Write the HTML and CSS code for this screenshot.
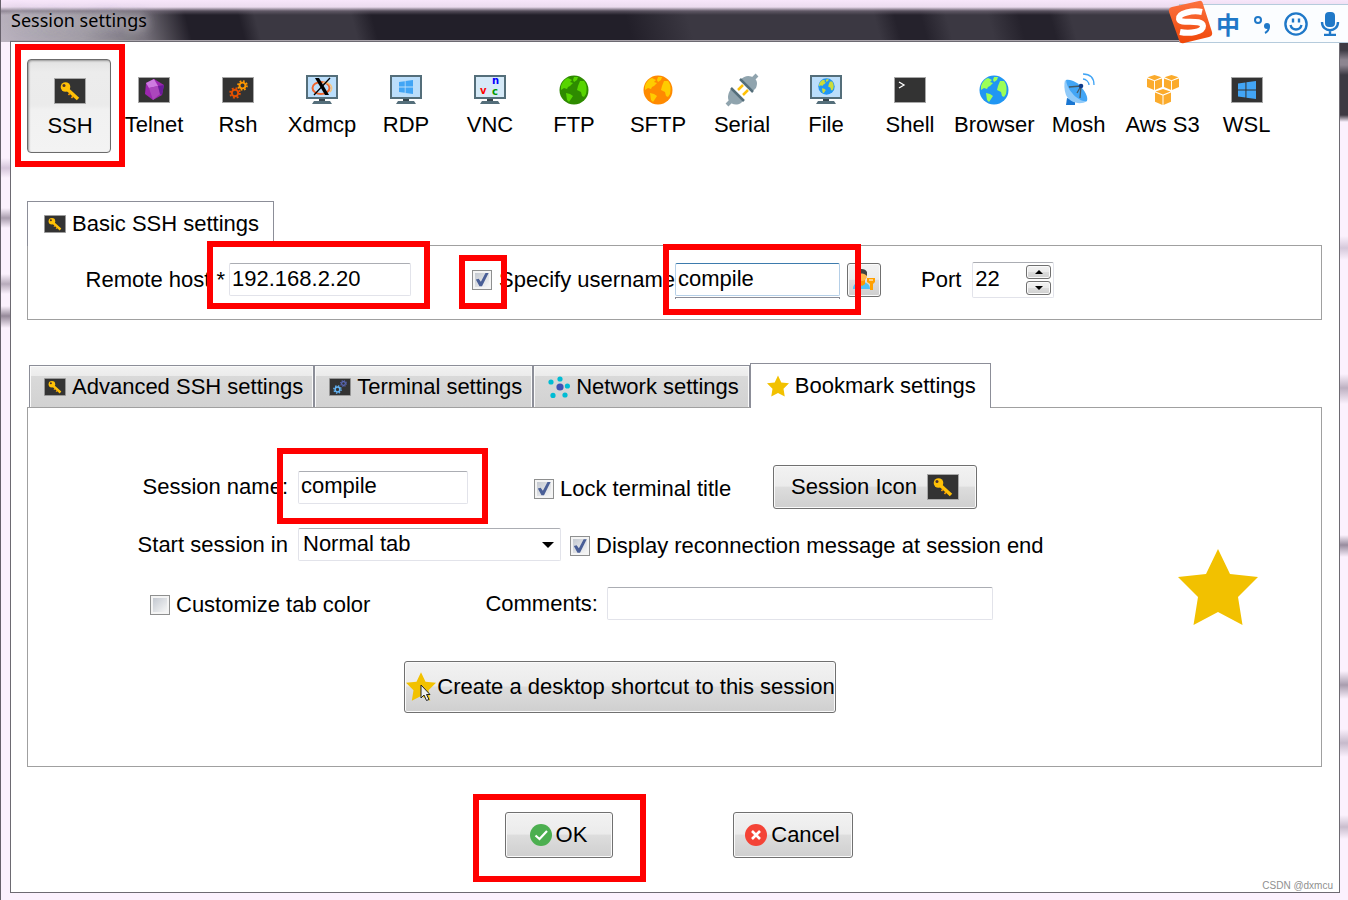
FILE: index.html
```html
<!DOCTYPE html>
<html lang="en">
<head>
  <meta charset="UTF-8">
  <title>Session settings</title>
  <link rel="stylesheet" href="styles.css">
</head>
<body>
  <!-- icon sprite -->
  <svg class="sprite" aria-hidden="true">
    <symbol id="i-screen" viewBox="0 0 32 26">
      <rect x="0.5" y="0.5" width="31" height="25" fill="#333" stroke="#a8a8a8"/>
    </symbol>
    <symbol id="i-key" viewBox="0 0 32 26">
      <rect x="0.5" y="0.5" width="31" height="25" fill="#333" stroke="#a8a8a8"/>
      <path d="M13 11 L24 21" stroke="#ffc107" stroke-width="3.6"/>
      <path d="M16 15 L14.500 17 M19 18 L17.500 20" stroke="#ffa000" stroke-width="1.500"/>
      <circle cx="11.500" cy="9" r="4.800" fill="#ffc107"/>
      <circle cx="10" cy="7.500" r="1.500" fill="#4e342e"/>
    </symbol>
    <symbol id="i-gear" viewBox="0 0 12 12">
      <circle cx="6" cy="6" r="3.200" fill="none" stroke="currentColor" stroke-width="2"/>
      <circle cx="6" cy="6" r="4.900" fill="none" stroke="currentColor" stroke-width="1.800" stroke-dasharray="1.900 1.950"/>
    </symbol>
    <symbol id="i-monitor" viewBox="0 0 32 30">
      <rect x="1" y="1" width="30" height="22" fill="#bbdefb" stroke="#546e7a" stroke-width="2"/>
      <path d="M13 24h6v3h-6z" fill="#37474f"/>
      <path d="M8 26h16l2 3H6z" fill="#546e7a"/>
    </symbol>
    <symbol id="i-windows" viewBox="0 0 16 16">
      <path d="M0 2.300L6.600 1.300V7.500H0z M7.500 1.200L16 0V7.500H7.500z M0 8.500H6.600V14.700L0 13.700z M7.500 8.500H16V16L7.500 14.800z" fill="currentColor"/>
    </symbol>
    <symbol id="i-globe" viewBox="0 0 30 30">
      <circle cx="15" cy="15" r="14.500" fill="var(--sea)"/>
      <path d="M2 11C3 7 6 4 9 3L13 5L11 7L14 8L11 11L9 12L8 14L5 13L2 15z" fill="var(--land)"/>
      <path d="M15 2L19 2L18 5L15 7L14 5z" fill="var(--land)"/>
      <path d="M7 18L11 19L14 21L12 24L10 27L8 25z" fill="var(--land)"/>
      <path d="M21 6L25 6C28 10 28 14 27 19L25 22L23 21L22 17L18 15L19 11z" fill="var(--land)"/>
    </symbol>
    <symbol id="i-star" viewBox="0 0 80 76">
      <path d="M40 0L52 25L80 28L60 48L64.500 76L40 63L15.500 76L20 48L0 28L28 25z" fill="#f2c100"/>
    </symbol>
    <symbol id="i-cube" viewBox="0 0 16 16">
      <path d="M8 0L15.500 2.500L8 5.500L0.500 2.500z M0 3.600L7.500 6.500V16L0 12.800z M16 3.600L8.500 6.500V16L16 12.800z" fill="#fbab2c"/>
    </symbol>
  </svg>

  <div class="window">
    <header class="titlebar"><h1>Session settings</h1></header>

    <main class="client">
      <nav class="types" aria-label="Session type">
        <button class="type active mark mark-ssh">
          <svg class="icon"><use href="#i-key" y="3" width="32" height="26"/></svg>SSH</button>
        <button class="type"><svg class="icon">
          <use href="#i-screen" y="3" width="32" height="26"/>
          <path d="M16 5L26 11L24 21L15 26L7 20L8 9z" fill="#9c27b0"/>
          <path d="M16 5L20 12L11 14L8 9z" fill="#ce7be0"/><path d="M11 14L20 12L22 20L15 26z" fill="#ab47bc"/><path d="M20 12L26 11L24 21L22 20z" fill="#6a1b9a"/>
        </svg>Telnet</button>
        <button class="type"><svg class="icon">
          <use href="#i-screen" y="3" width="32" height="26"/>
          <use class="c-rust" href="#i-gear" x="7" y="13" width="12" height="12"/>
          <use class="c-orange" href="#i-gear" x="15" y="6" width="11" height="11"/>
        </svg>Rsh</button>
        <button class="type"><svg class="icon">
          <use href="#i-monitor" y="1" width="32" height="30"/>
          <ellipse cx="15" cy="14" rx="8.500" ry="6" fill="none" stroke="#f0642d" stroke-width="2"/>
          <path d="M17 8.500C24 8 28 13 24 18" fill="none" stroke="#f5c37e" stroke-width="1.500"/>
          <path d="M9 4h4l10 17h-4z" fill="#000"/>
          <path d="M24 4L8 21" stroke="#000" stroke-width="1.300"/>
        </svg>Xdmcp</button>
        <button class="type"><svg class="icon">
          <use href="#i-monitor" y="1" width="32" height="30"/>
          <use class="c-blue" href="#i-windows" x="9" y="6" width="14" height="14"/>
        </svg>RDP</button>
        <button class="type"><svg class="icon icon-vnc">
          <use href="#i-monitor" y="1" width="32" height="30"/>
          <rect x="2" y="3" width="28" height="20" fill="#d6eaf8"/>
          <text x="6" y="20" fill="#f00">v</text><text x="18" y="10" fill="#00f">n</text><text x="18" y="21" fill="#090">c</text>
        </svg>VNC</button>
        <button class="type"><svg class="icon globe-green"><use href="#i-globe" x="1" y="1" width="30" height="30"/></svg>FTP</button>
        <button class="type"><svg class="icon globe-orange"><use href="#i-globe" x="1" y="1" width="30" height="30"/></svg>SFTP</button>
        <button class="type"><svg class="icon">
          <path d="M1 31L6 26M26 6L31 1" stroke="#90a4ae" stroke-width="4"/>
          <path d="M12 16L17 11M17 21L22 16" stroke="#ffc107" stroke-width="2.500"/>
          <path d="M6 14L18 26L15 29C10 32 5 30 3 27C1 24 2 18 6 14z M14 6L26 18L30 14C32 9 31 6 28 4C24 1 19 1 14 6z" fill="#90a4ae"/>
          <path d="M5 14L18 27M14 5L27 18" stroke="#546e7a" stroke-width="2.500"/>
        </svg>Serial</button>
        <button class="type"><svg class="icon globe-file">
          <use href="#i-monitor" y="1" width="32" height="30"/>
          <use href="#i-globe" x="8" y="4" width="17" height="17"/>
        </svg>File</button>
        <button class="type"><svg class="icon">
          <use href="#i-screen" y="3" width="32" height="26"/>
          <path d="M5 8L10 11L5 14" fill="none" stroke="#fff" stroke-width="1.300"/>
        </svg>Shell</button>
        <button class="type"><svg class="icon globe-blue"><use href="#i-globe" x="1" y="1" width="30" height="30"/></svg>Browser</button>
        <button class="type"><svg class="icon">
          <path d="M4 24L12 26L12 31H3z" fill="#1976d2"/>
          <path d="M2 6L24 27C17 32 6 28 3 21C1 16 1 10 2 6z" fill="#90caf9"/>
          <path d="M3 6C9 5 15 9 19 14C23 19 25 23 24 27C17 29 4 17 3 6z" fill="#42a5f5"/>
          <path d="M6 13L18 12L17 24M18 12L14 19" fill="none" stroke="#455a64" stroke-width="1.300"/>
          <circle cx="18" cy="12" r="2.300" fill="#0d3c8c"/>
          <path d="M20 5C23 5 26 8 26 11M20 0C27 0 31 4 31 11" fill="none" stroke="#42a5f5" stroke-width="1.300"/>
        </svg>Mosh</button>
        <button class="type"><svg class="icon">
          <use href="#i-cube" y="1" width="15" height="15"/><use href="#i-cube" x="17" y="1" width="15" height="15"/><use href="#i-cube" x="8" y="15" width="16" height="16"/>
        </svg>Aws S3</button>
        <button class="type"><svg class="icon">
          <use href="#i-screen" y="3" width="32" height="26"/>
          <use class="c-blue" href="#i-windows" x="7" y="7" width="18" height="18"/>
        </svg>WSL</button>
      </nav>

      <section class="basic">
        <div class="tabs" role="tablist">
          <button class="tab selected" role="tab" aria-selected="true"><svg class="tab-icon"><use href="#i-key" y="2" width="22" height="18"/></svg>Basic SSH settings</button>
        </div>
        <div class="panel basic-panel">
          <label class="host-label" for="host">Remote host *</label>
          <span class="mark mark-host"><input class="box host" id="host" type="text" value="192.168.2.20"></span>
          <span class="mark mark-check"><input type="checkbox" id="specify" checked></span>
          <label class="specify-label" for="specify">Specify username</label>
          <span class="mark mark-user"><input class="box user" type="text" value="compile" aria-label="Username"></span>
          <button class="btn user-btn" aria-label="Manage users">
            <svg width="26" height="26">
              <path d="M2 22C2 17 6 15 11 15S19 18 19 22z" fill="#4fc3f7"/>
              <path d="M8 12h6v5l-3 2l-3-2z" fill="#ff9800"/>
              <circle cx="11" cy="9" r="5" fill="#ffb74d"/>
              <path d="M5 9C4 1 14 0 16 5V9C14 7 12 6 9 7L6 10z" fill="#424242"/>
              <path d="M16 11h8v4l-2 2v6h-3v-6l-3-2z" fill="#ffa000"/><path d="M18 13h4" stroke="#fff"/>
            </svg>
          </button>
          <label class="port-label" for="port">Port</label>
          <span class="spinner">
            <input id="port" type="text" value="22">
            <span class="spin-buttons">
              <button class="btn" aria-label="Increase port"><svg width="8" height="4"><path d="M0 4L4 0L8 4z"/></svg></button>
              <button class="btn" aria-label="Decrease port"><svg width="8" height="4"><path d="M0 0L4 4L8 0z"/></svg></button>
            </span>
          </span>
        </div>
      </section>

      <section class="details">
        <div class="tabs tabs-details" role="tablist">
          <button class="tab" role="tab"><svg class="tab-icon"><use href="#i-key" y="2" width="22" height="18"/></svg>Advanced SSH settings</button>
          <button class="tab" role="tab"><svg class="tab-icon">
            <use href="#i-screen" y="2" width="22" height="18"/>
            <use class="c-sky" href="#i-gear" x="4" y="9" width="9" height="9"/><use class="c-indigo" href="#i-gear" x="11" y="4" width="7" height="7"/>
          </svg>Terminal settings</button>
          <button class="tab" role="tab"><svg class="tab-icon">
            <g fill="#00bcd4"><circle cx="3" cy="6" r="2.600"/><circle cx="12" cy="3" r="2.600"/><circle cx="19.400" cy="10" r="2.600"/><circle cx="17" cy="19" r="2.600"/><circle cx="5" cy="19.400" r="2.600"/></g>
            <circle cx="12" cy="11" r="3.600" fill="#3f51b5"/>
          </svg>Network settings</button>
          <button class="tab selected" role="tab" aria-selected="true"><svg class="tab-icon"><use href="#i-star" width="22" height="22"/></svg>Bookmark settings</button>
        </div>
        <div class="panel bookmark-panel">
          <div class="form">
            <div class="row">
              <label class="row-label" for="name">Session name:</label>
              <span class="mark mark-name"><input class="box name" id="name" type="text" value="compile"></span>
              <label class="check lock"><input type="checkbox" checked>Lock terminal title</label>
              <button class="btn icon-btn">Session Icon <svg width="32" height="26"><use href="#i-key" width="32" height="26"/></svg></button>
            </div>
            <div class="row row-start">
              <label class="row-label" for="start">Start session in</label>
              <span class="drop"><select class="box" id="start"><option>Normal tab</option></select></span>
              <label class="check"><input type="checkbox" checked>Display reconnection message at session end</label>
            </div>
            <div class="row row-comments">
              <label class="check custom"><input type="checkbox">Customize tab color</label>
              <label class="comments-label" for="comments">Comments:</label>
              <input class="box comments" id="comments" type="text">
            </div>
            <button class="btn shortcut">
              <svg width="32" height="32">
                <use href="#i-star" x="1" y="1" width="30" height="29"/>
                <path d="M16 14V27L19 24L21.500 29.500L24 28.500L21.500 23.500H25z" fill="#eee" stroke="#222"/>
              </svg>Create a desktop shortcut to this session
            </button>
          </div>
          <svg class="big-star" width="80" height="76" aria-hidden="true"><use href="#i-star" width="80" height="76"/></svg>
        </div>
      </section>

      <footer class="actions">
        <button class="btn ok mark mark-ok"><svg width="22" height="22">
          <circle cx="11" cy="11" r="11" fill="#4caf50"/><path d="M5.500 11.500L9.500 15L17 7" fill="none" stroke="#fff" stroke-width="2.200"/>
        </svg>OK</button>
        <button class="btn cancel"><svg width="22" height="22">
          <circle cx="11" cy="11" r="11" fill="#f44336"/><path d="M7 7L15 15M15 7L7 15" stroke="#fff" stroke-width="2.600"/>
        </svg>Cancel</button>
      </footer>
      <span class="credit">CSDN @dxmcu</span>
    </main>
  </div>

  <!-- floating input method bar -->
  <div class="ime">
    <svg class="ime-logo" width="46" height="44" viewBox="0 0 46 44">
      <defs><linearGradient id="flame" x2="0" y2="1"><stop offset="0" stop-color="#fb7240"/><stop offset="1" stop-color="#f04708"/></linearGradient></defs>
      <path d="M4 7L31 1Q34 0 35 4L44 32Q45 36 41 37L16 43Q12 44 11 40L1 12Q0 8 4 7z" fill="url(#flame)"/>
      <path d="M34 12C25 10 10 13 11 19C12 25 34 18 35 26C35 32 22 34 12 32" fill="none" stroke="#fff" stroke-width="6"/>
    </svg>
    <span class="ime-lang" lang="zh">中</span>
    <svg width="20" height="24"><circle cx="6" cy="8" r="3" fill="none" stroke="#1f78c8" stroke-width="2"/><circle cx="15" cy="14" r="3" fill="#1f78c8"/><path d="M17 14Q17 19 13 21" fill="none" stroke="#1f78c8" stroke-width="2"/></svg>
    <svg width="24" height="24" fill="none" stroke="#1f78c8" stroke-width="2.400"><circle cx="12" cy="12" r="10.600"/><path d="M9 6.500v4M15 6.500v4M6.500 13C8 19 16 19 17.500 13"/></svg>
    <svg width="20" height="24"><rect x="5" y="0" width="10" height="15" rx="4" fill="#1f78c8"/><path d="M2 10C2 21 18 21 18 10M10 18V23M4 23H16" fill="none" stroke="#1f78c8" stroke-width="2.400"/></svg>
  </div>
</body>
</html>
```

FILE: styles.css
```css
* { box-sizing: border-box; }
body {
  margin: 0;
  background: #fbf1fd;
  font-family: "Liberation Sans", Arial, sans-serif;
  font-size: 22px;
  line-height: 26px;
  color: #000;
}
button, input, select { font: inherit; color: inherit; margin: 0; padding: 0; }
svg { flex: none; }
.sprite { position: absolute; width: 0; height: 0; }
.c-rust { color: #e65100; }
.c-orange { color: #ff9800; }
.c-blue { color: #42a5f5; }
.c-sky { color: #64b5f6; }
.c-indigo { color: #5c6bc0; }
.globe-green { --sea: #2e8b00; --land: #57d500; }
.globe-orange { --sea: #ff8a00; --land: #ffcc00; }
.globe-blue { --sea: #2196f3; --land: #9cff57; }
.globe-file { --sea: #2196f3; --land: #cddc39; }

/* window frame */
.window {
  display: flex;
  flex-direction: column;
  min-height: 100vh;
  padding: 0 8px 7px 9px;
  border-left: 1px solid #66606a;
  background:
    linear-gradient(#f7e6fa 0, #ecdcef 7px, rgba(120,110,125,0.6) 11px, rgba(34,31,41,0) 15px) 0 0 / 100% 42px no-repeat,
    linear-gradient(75deg, #bbb3bf 0, #a39ea6 80px, #77727b 140px, #221f29 185px, #221f29 236px, #3b3842 252px, #3b3842 345px, #221f29 365px, #221f29 610px, #3b3842 670px, #3b3842 850px, #25222c 870px, #25222c 895px, #3b3842 920px, #3b3842 960px, #25222c 990px, #25222c 1020px, #3b3842 1040px) 0 0 / 100% 42px no-repeat,
    linear-gradient(#3d3a43 0, #3d3a43 50px, #8d8590 60px, #8d8590 65px, #3d3a43 75px, #3d3a43 115px, rgba(61,58,67,0) 122px) 100% 0 / 8px 130px no-repeat,
    linear-gradient(rgba(200,185,205,0) 0, #d5c5da 10px, rgba(200,185,205,0) 20px, rgba(0,0,0,0) 50px, #a99dad 60px, rgba(0,0,0,0) 70px, rgba(0,0,0,0) 116px, #b7abbb 126px, rgba(0,0,0,0) 136px, rgba(0,0,0,0) 148px, #958999 158px, rgba(0,0,0,0) 170px) 0 158px / 10px 170px no-repeat,
    linear-gradient(rgba(0,0,0,0) 0, #d5c8da 12px, rgba(0,0,0,0) 24px, rgba(0,0,0,0) 138px, #bdb0c1 152px, rgba(0,0,0,0) 168px) 100% 236px / 8px 310px no-repeat,
    linear-gradient(rgba(0,0,0,0) 0, #988c9e 10px, rgba(0,0,0,0) 22px, rgba(0,0,0,0) 136px, #a99dae 150px, rgba(0,0,0,0) 164px, rgba(0,0,0,0) 194px, #c6bacb 208px, rgba(0,0,0,0) 222px, rgba(0,0,0,0) 280px, #c9bdcd 292px, rgba(0,0,0,0) 304px) 100% 535px / 8px 320px no-repeat,
    #fbf1fd;
}
.titlebar { height: 41px; padding: 8px 1px; border-bottom: 1px solid #aaa5ac; }
.titlebar h1 {
  margin: 0;
  font: 18px/24px "Noto Sans", "Open Sans", sans-serif;
  text-shadow: 0 0 8px #c6c0c9, 0 0 12px #a9a3ac, 0 0 16px #a9a3ac;
}
.client {
  position: relative;
  flex: 1;
  padding: 17px 17px 34px 16px;
  background: #fff;
  border: 1px solid #6d6a72;
}

/* session types */
.types { display: flex; margin-bottom: 48px; }
.type {
  display: flex;
  flex: 0 1 84px;
  flex-direction: column;
  align-items: center;
  gap: 6px;
  height: 94px;
  padding: 14px 0 0 2px;
  border: 1px solid transparent;
  border-radius: 4px;
  background: none;
  white-space: nowrap;
}
.type.active {
  padding-top: 15px;
  border-color: #6b6b6b;
  background: linear-gradient(#e2e2e2, #ececec 12px, #ebebeb 45px, #f1f1f1 50px, #f3f3f3);
  box-shadow: inset 1px 1px 2px #999;
}
.icon { width: 32px; height: 32px; overflow: visible; }
.icon-vnc { font: bold 10px/10px "DejaVu Sans", sans-serif; }

/* tabs */
.tabs { display: flex; align-items: flex-end; }
.tab {
  display: flex;
  align-items: center;
  gap: 6px;
  height: 42px;
  padding: 0 10px 0 14px;
  border: 1px solid #8c8e98;
  border-bottom: 0;
  background: linear-gradient(#f2f2f2, #ebebeb 10px, #d9d9d9 10px, #d2d2d2);
  box-shadow: inset 1px 1px #fafafa, inset -1px 0 #fafafa;
  white-space: nowrap;
}
.tab.selected {
  position: relative;
  height: 45px;
  margin-bottom: -1px;
  padding: 0 14px 0 16px;
  background: #fff;
  box-shadow: none;
}
.tabs-details { margin-left: 2px; }
.tab-icon { width: 22px; height: 22px; }
.panel { border: 1px solid #a0a0a0; }

/* form controls */
.box {
  height: 33px;
  padding: 0 2px 2px;
  border: 1px solid #e2e3ea;
  border-top-color: #abadb3;
  border-radius: 2px;
  background: #fff;
}
.btn {
  display: flex;
  align-items: center;
  justify-content: center;
  border: 1px solid #707070;
  border-radius: 3px;
  background: linear-gradient(#f2f2f2, #ebebeb 48%, #dddddd 50%, #cfcfcf);
  box-shadow: inset 0 0 0 1px #fafafa;
  white-space: nowrap;
}
input[type="checkbox"] {
  appearance: none;
  display: block;
  flex: none;
  width: 20px;
  height: 20px;
  padding: 2px;
  border: 1px solid #8e8f8f;
  background: linear-gradient(135deg, #c3c8d0, #f6f6f6) content-box, #f4f4f4;
}
input[type="checkbox"]:checked::before {
  content: "";
  display: block;
  width: 14px;
  height: 14px;
  background: #4a5f97;
  clip-path: polygon(6% 50%, 26% 44%, 42% 66%, 76% 2%, 98% 2%, 50% 98%, 32% 98%);
}

/* red frames round the fields to fill in */
.mark { position: relative; }
.mark::after {
  content: "";
  position: absolute;
  z-index: 2;
  border: 6px solid #f00;
  pointer-events: none;
}
.mark-ssh::after { inset: -16px -15px -15px -13px; }
.mark-host::after { inset: -22px -19px -13px -22px; }
.mark-check::after { inset: -15px -15px -19px -13px; }
.mark-user::after { inset: -19px -21px -19px -12px; }
.mark-name::after { inset: -23px -20px -20px -21px; }
.mark-ok::after { inset: -19px -34px -25px -33px; }

/* basic settings */
.basic { margin-bottom: 43px; }
.basic-panel {
  display: flex;
  align-items: center;
  min-height: 75px;
  padding-bottom: 6px;
  white-space: nowrap;
}
.mark .box { display: block; }
.host-label { width: 197px; margin-right: 4px; text-align: right; }
.host { width: 182px; }
.mark-check { margin-left: 61px; }
.specify-label { width: 176px; margin-left: 7px; }
.user { width: 165px; border-color: #b5cfe7; border-top-color: #3d7bad; }
.mark-user::before {
  content: "";
  position: absolute;
  inset: 34px 0 -3px 0;
  border: 1px solid #8c8e98;
  border-bottom: 0;
}
.user-btn { width: 34px; height: 34px; margin-left: 7px; }
.port-label { margin-left: 40px; }
.spinner {
  display: flex;
  width: 82px;
  height: 36px;
  margin-left: 11px;
  padding: 2px;
  border: 1px solid #e2e3ea;
  border-top-color: #abadb3;
  border-radius: 2px;
}
.spinner input { flex: 1; width: 0; height: 28px; border: 0; background: none; }
.spin-buttons { display: flex; flex-direction: column; gap: 2px; }
.spin-buttons .btn { width: 25px; height: 14px; }

/* bookmark settings */
.bookmark-panel { display: flex; align-items: center; padding: 57px 63px 53px 0; }
.form { flex: 1; white-space: nowrap; }
.row { display: flex; align-items: center; }
.row-label { width: 260px; margin-right: 10px; text-align: right; }
.check { display: flex; align-items: center; gap: 6px; padding-top: 3px; }
.name { width: 170px; }
.lock { width: 192px; margin-left: 66px; }
.icon-btn { gap: 10px; width: 204px; height: 44px; margin-left: 47px; }
.row-start { margin-top: 19px; }
.drop { position: relative; margin-right: 9px; }
.drop select { display: block; width: 263px; padding-left: 4px; appearance: none; }
.drop::after {
  content: "";
  position: absolute;
  top: 14px;
  right: 7px;
  border: 6px solid transparent;
  border-top-color: #000;
  border-bottom: 0;
  pointer-events: none;
}
.row-comments { margin-top: 26px; padding-left: 122px; }
.comments-label { margin-left: 115px; }
.comments { width: 386px; margin-left: 9px; }
.shortcut { width: 432px; height: 52px; margin: 41px 0 0 376px; }
.big-star { margin-bottom: 4px; }

/* bottom buttons */
.actions { display: flex; justify-content: center; gap: 120px; margin-top: 45px; padding-left: 8px; }
.actions .btn { gap: 4px; height: 46px; }
.ok { width: 108px; }
.cancel { width: 120px; }
.credit {
  position: absolute;
  right: 6px;
  bottom: 0;
  font-size: 10px;
  line-height: 12px;
  color: #8f8f8f;
}

/* input method bar */
.ime {
  position: absolute;
  top: 4px;
  right: 0;
  display: flex;
  align-items: center;
  gap: 12px;
  height: 39px;
  padding: 0 8px 0 36px;
  background: #fbfdff;
  border: 1px solid #b5cbdc;
  border-right: 0;
  color: #1f78c8;
}
.ime-logo { position: absolute; left: -12px; top: -5px; }
.ime-lang { font: bold 24px/32px "Noto Sans CJK SC", sans-serif; }
```
